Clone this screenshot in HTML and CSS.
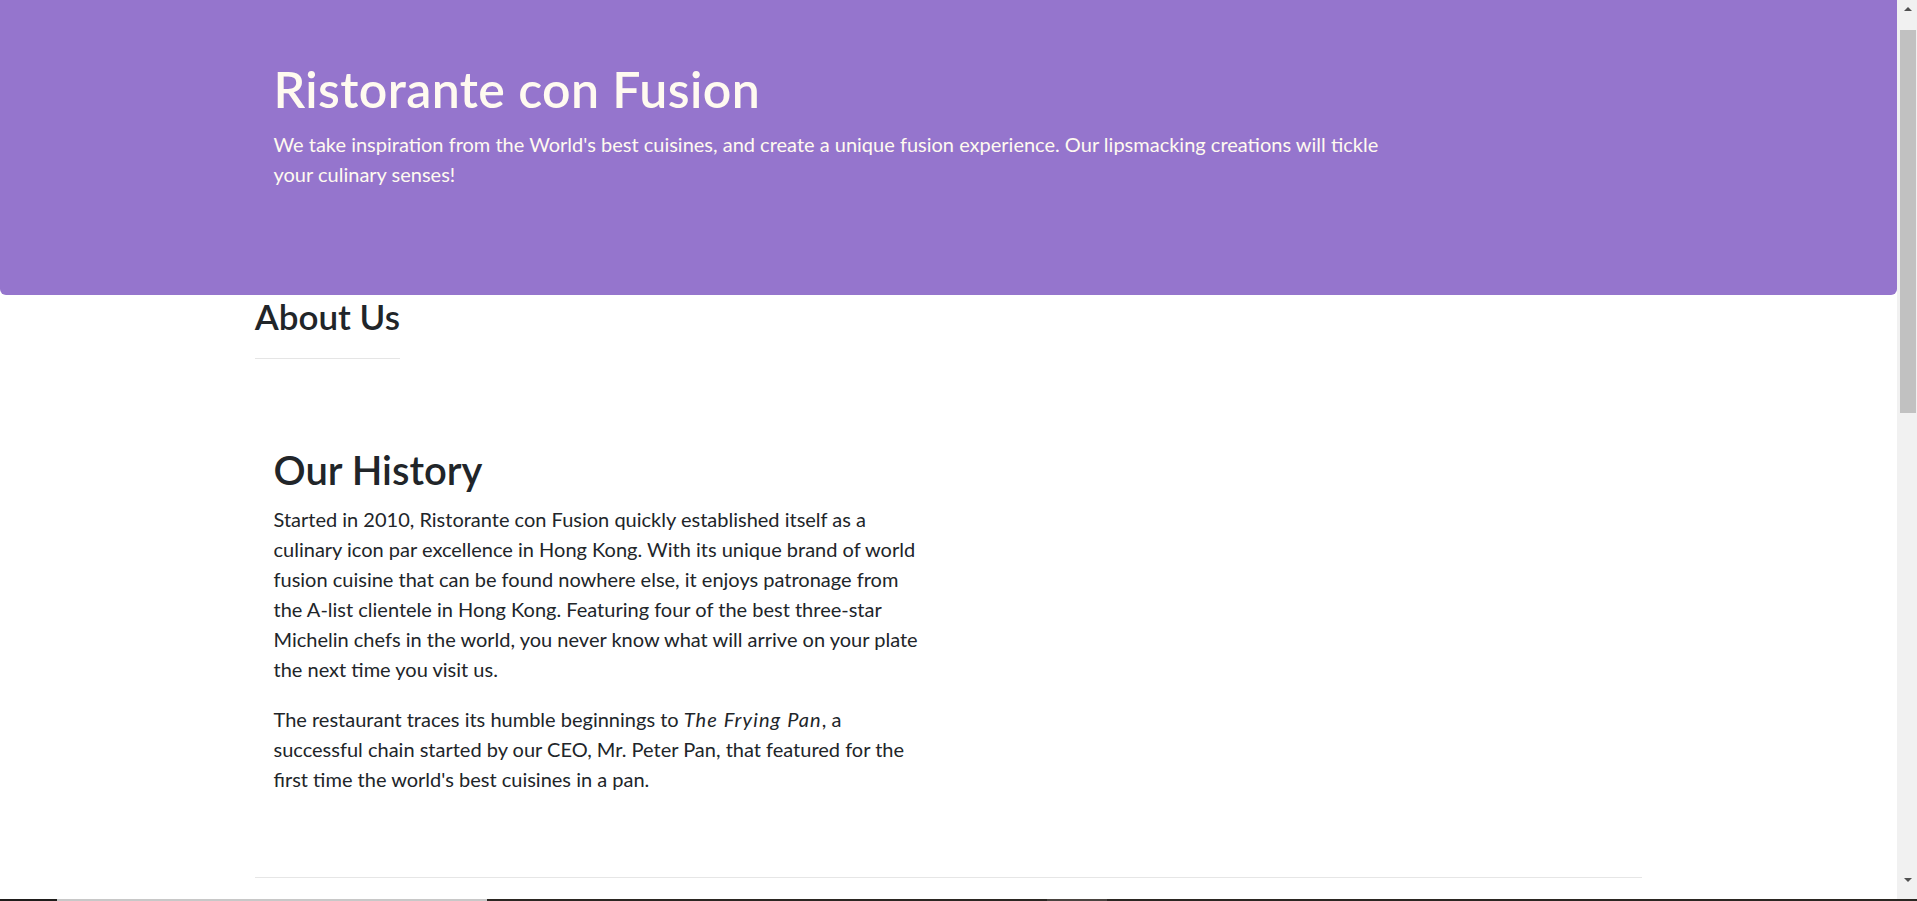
FILE: index.html
```
<!DOCTYPE html>
<html lang="en">
<head>
<meta charset="utf-8">
<title>Ristorante con Fusion - About Us</title>
<link rel="stylesheet" href="styles.css">
</head>
<body>
<div class="screen">
  <div class="viewport">
    <header class="jumbotron">
      <div class="container">
        <div class="row row-header">
          <div class="col col-10">
            <h1>Ristorante con Fusion</h1>
            <p>We take inspiration from the World's best cuisines, and create a unique fusion experience. Our lipsmacking creations will tickle your culinary senses!</p>
          </div>
        </div>
      </div>
    </header>

    <div class="container">
      <div class="row">
        <div class="page-title">
          <h3>About Us</h3>
          <hr>
        </div>
      </div>
      <div class="row row-content">
        <div class="col col-6">
          <h2>Our History</h2>
          <p>Started in 2010, Ristorante con Fusion quickly established itself as a culinary icon par excellence in Hong Kong. With its unique brand of world fusion cuisine that can be found nowhere else, it enjoys patronage from the A-list clientele in Hong Kong. Featuring four of the best three-star Michelin chefs in the world, you never know what will arrive on your plate the next time you visit us.</p>
          <p>The restaurant traces its humble beginnings to <em>The Frying Pan</em>, a successful chain started by our CEO, Mr. Peter Pan, that featured for the first time the world's best cuisines in a pan.</p>
        </div>
      </div>
    </div>
  </div>
  <div class="scrollbar">
    <div class="sb-btn"><span class="arrow-up"></span></div>
    <div class="sb-thumb"></div>
    <div class="sb-btn sb-btn-down"><span class="arrow-down"></span></div>
  </div>
</div>
<div class="taskbar">
  <span class="tb-seg tb-dark-a"></span>
  <span class="tb-seg tb-light"></span>
  <span class="tb-seg tb-dark-b"></span>
  <span class="tb-seg tb-mid"></span>
  <span class="tb-seg tb-dark-c"></span>
</div>
</body>
</html>
```
FILE: styles.css
```
html, body {
  margin: 0;
  padding: 0;
  height: 901px;
  overflow: hidden;
}

body {
  display: flex;
  flex-direction: column;
  font-family: Lato, "Liberation Sans", sans-serif;
  font-size: 20px;
  line-height: 30px;
  color: #212529;
  background: #fff;
}

*, *::before, *::after {
  box-sizing: border-box;
}

.screen {
  flex: 1;
  display: flex;
  min-height: 0;
}

.viewport {
  flex: 1;
  min-width: 0;
  overflow: hidden;
}

/* ---------- jumbotron ---------- */
.jumbotron {
  background: #9575CD;
  color: #FFFAF0;
  padding: 58.5px 37.5px 86.5px;
  border-radius: 0 0 6px 6px;
}

.container {
  max-width: 1425px;
  margin: 0 auto;
  padding: 0 18.75px;
}

.row {
  display: flex;
  flex-wrap: wrap;
}

.row-header {
  margin: 0 auto;
}

.col {
  padding: 0 18.75px;
}

.col-10 {
  flex: 0 0 83.3333%;
  max-width: 83.3333%;
}

.col-6 {
  flex: 0 0 50%;
  max-width: 50%;
}

h1, h2, h3 {
  font-weight: 600;
  line-height: 1.2;
  margin: 0 0 10px;
}

h1 {
  font-size: 50px;
  letter-spacing: 0.4px;
}

h2 {
  font-size: 40px;
}

h3 {
  font-size: 35px;
}

p {
  margin: 0 0 20px;
}

/* ---------- about title ---------- */
.page-title {
  width: fit-content;
}

.page-title hr {
  margin: 21px 0 20px;
  border: 0;
  border-top: 1px solid rgba(0, 0, 0, 0.1);
  height: 0;
}

/* ---------- history ---------- */
.row-content {
  margin: 0 auto;
  width: 100%;
  padding: 67px 0 62.5px;
  border-bottom: 1px solid #e6e6e6;
}

.row-content em {
  font-style: italic;
  letter-spacing: 1.1px;
}

/* ---------- fake scrollbar ---------- */
.scrollbar {
  width: 20px;
  flex: 0 0 20px;
  background: #f1f1f1;
  display: flex;
  flex-direction: column;
  align-items: center;
}

.sb-btn {
  width: 100%;
  height: 21px;
  display: flex;
  justify-content: center;
  align-items: center;
  padding-left: 2px;
}

.sb-btn-down {
  margin-top: auto;
  height: 24px;
  align-items: flex-start;
  padding-top: 3px;
}

.arrow-up {
  width: 0;
  height: 0;
  border-left: 4px solid transparent;
  border-right: 4px solid transparent;
  border-bottom: 4px solid #505050;
  margin-top: -3px;
}

.arrow-down {
  width: 0;
  height: 0;
  border-left: 4px solid transparent;
  border-right: 4px solid transparent;
  border-top: 4px solid #505050;
}

.sb-thumb {
  margin-top: 9px;
  margin-left: 1px;
  width: 16px;
  height: 383px;
  background: #c1c1c1;
}

/* ---------- taskbar edge ---------- */
.taskbar {
  flex: 0 0 2px;
  display: flex;
  background: #2b2722;
}

.tb-seg {
  display: block;
  height: 2px;
}

.tb-dark-a { width: 57px; background: #1f1d1b; }
.tb-light { width: 430px; background: #c8c8c8; }
.tb-dark-b { width: 560px; background: #2b2722; }
.tb-mid { width: 60px; background: #4a4440; }
.tb-dark-c { flex: 1; background: #2b2722; }
```
